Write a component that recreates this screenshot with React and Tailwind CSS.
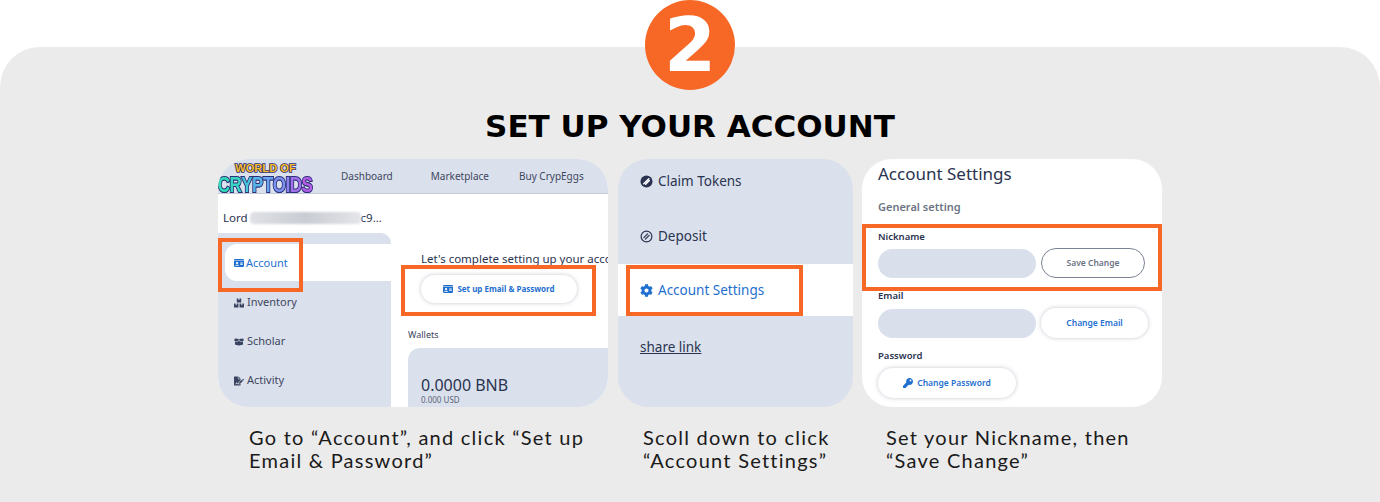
import { FaIdCard, FaBoxes, FaBoxOpen, FaKey, FaCog, FaFileSignature } from "react-icons/fa";

const ink = "text-[#2a3350]";
const blue = "text-[#1f6fd0]";

function Highlight({ className }) {
    return <div className={`absolute border-4 border-[#f76826] ${className}`}></div>;
}

function Logo() {
    return (
        <div className="flex flex-col items-center w-[94px] shrink-0 font-['Liberation_Sans',sans-serif] font-bold leading-none [paint-order:stroke_fill] [-webkit-text-stroke:1.6px_#2b2f78]">
            <div className="text-[11px] h-[10px] -mt-[3px] ml-[1px] tracking-[0.1px] text-[#fbbf24] [paint-order:stroke_fill]">WORLD OF</div>
            <div className="flex text-[17px] h-[14px] tracking-[-0.5px] scale-y-[1.35] origin-top [paint-order:stroke_fill] [text-shadow:0_1px_0_#2b2f78]">
                <span className="text-[#2fe0b8]">C</span>
                <span className="text-[#3ad6c4]">R</span>
                <span className="text-[#46c6d8]">Y</span>
                <span className="text-[#5ab4e8]">P</span>
                <span className="text-[#6aa4ee]">T</span>
                <span className="text-[#7c94f0]">O</span>
                <span className="text-[#8c84ee]">I</span>
                <span className="text-[#a070ea]">D</span>
                <span className="text-[#b45ee8]">S</span>
            </div>
        </div>
    );
}

function SideItem({ icon: Icon, label }) {
    return (
        <div className="h-[39px] flex items-center pl-4 gap-[3px] text-[11px] text-[#3d4660]">
            <Icon className="w-[10px] h-[10px] text-[#3a4360]" />
            <span>{label}</span>
        </div>
    );
}

function AccountCard() {
    return (
        <div className="relative w-[390px] h-[248px]">
            <div className="w-full h-full rounded-[30px] overflow-hidden bg-white flex flex-col">
                <div className="h-[35px] shrink-0 bg-[#dbe1ec] border-b border-[#c3cad8] flex items-center text-[10px] text-[#3d4660]">
                    <Logo />
                    <span className="ml-[29px]">Dashboard</span>
                    <span className="ml-[38px]">Marketplace</span>
                    <span className="ml-[30px]">Buy CrypEggs</span>
                </div>
                <div className="flex flex-1 min-h-0">
                    <div className="w-[173px] shrink-0">
                        <div className="h-[39px] pl-[5px] pt-[8px] flex items-center text-[11.5px] text-[#2a3350]">
                            <span>Lord</span>
                            <div className="w-[111px] h-[12px] ml-[2px] rounded-sm bg-gradient-to-r from-[#dfe1e6] via-[#c9ccd3] to-[#e4e5e9] blur-[1px]"></div>
                            <span>c9...</span>
                        </div>
                        <div className="h-[174px] bg-[#dbe1ec] rounded-tr-[10px] pt-[11px] pl-[7px]">
                            <div className={`h-[37px] bg-white rounded-l-[12px] flex items-center pl-[9px] pt-[1px] gap-[2px] text-[11px] ${blue}`}>
                                <FaIdCard className="w-[10px] h-[10px]" />
                                <span>Account</span>
                            </div>
                            <div className="-ml-[7px] pt-[2px]">
                                <SideItem icon={FaBoxes} label="Inventory" />
                                <SideItem icon={FaBoxOpen} label="Scholar" />
                                <SideItem icon={FaFileSignature} label="Activity" />
                            </div>
                        </div>
                    </div>
                    <div className="flex-1 min-w-0 pl-[17px] overflow-hidden">
                        <div className="pl-[13px] pt-[57px] text-[11.5px] leading-[16px] text-[#2a3350] whitespace-nowrap">Let's complete setting up your account</div>
                        <div className="ml-[13px] mt-[8px] w-[156px] h-[28px] rounded-full bg-white shadow-[0_0_4px_rgba(60,70,100,0.3)] flex items-center justify-center gap-[4px] text-[8px] font-bold text-[#1f6fd0]">
                            <FaIdCard className="w-[10px] h-[10px]" />
                            <span>Set up Email &amp; Password</span>
                        </div>
                        <div className="mt-[26px] text-[9px] leading-[12px] text-[#3d4660]">Wallets</div>
                        <div className="mt-[7px] h-[60px] bg-[#dbe1ec] rounded-tl-[12px] pl-[13px] pt-[27px]">
                            <div className="text-[16px] leading-[20px] text-[#2a3350] whitespace-nowrap">0.0000 BNB</div>
                            <div className="text-[8px] leading-[10px] text-[#5a6378]">0.000 USD</div>
                        </div>
                    </div>
                </div>
            </div>
            <Highlight className="left-0 top-[79px] w-[85px] h-[54px]" />
            <Highlight className="left-[183px] top-[106px] w-[195px] h-[51px]" />
        </div>
    );
}

function ClaimIcon() {
    return (
        <svg viewBox="0 0 14 14" className="w-[13px] h-[13px] shrink-0">
            <circle cx="7" cy="7" r="6.5" fill="#2a3350" />
            <path d="M4 9.5 9.5 4M6 10 10 6" stroke="#fff" strokeWidth="1.6" strokeLinecap="round" />
        </svg>
    );
}

function DepositIcon() {
    return (
        <svg viewBox="0 0 14 14" className="w-[13px] h-[13px] shrink-0" fill="none" stroke="#2a3350">
            <circle cx="7" cy="7" r="5.8" strokeWidth="1.3" />
            <path d="M4.2 8.2 8.2 4.2M5.8 9.8 9.8 5.8" strokeWidth="1.3" strokeLinecap="round" />
        </svg>
    );
}

function MenuCard() {
    return (
        <div className="relative w-[235px] h-[248px] ml-[10px]">
            <div className="w-full h-full rounded-[30px] overflow-hidden bg-[#dbe1ec] flex flex-col text-[13.5px]">
                <div className={`mt-[12px] h-[20px] pl-[22px] flex items-center gap-[5px] ${ink}`}>
                    <ClaimIcon />
                    <span>Claim Tokens</span>
                </div>
                <div className={`mt-[35px] h-[20px] pl-[22px] flex items-center gap-[5px] ${ink}`}>
                    <DepositIcon />
                    <span>Deposit</span>
                </div>
                <div className={`mt-[18px] h-[52px] bg-white pl-[22px] flex items-center gap-[5px] ${blue}`}>
                    <FaCog className="w-[13px] h-[13px]" />
                    <span>Account Settings</span>
                </div>
                <div className={`mt-[21px] pl-[22px] underline ${ink}`}>share link</div>
            </div>
            <Highlight className="left-[8px] top-[106px] w-[177px] h-[51px]" />
        </div>
    );
}

function FieldRow({ className, children }) {
    return (
        <div className={`flex items-center pl-[16px] ${className}`}>
            <div className="w-[158px] h-[29px] rounded-full bg-[#d9e0ec]"></div>
            {children}
        </div>
    );
}

function SettingsCard() {
    const label = `pl-[16px] text-[9.5px] leading-[12px] font-semibold ${ink}`;
    const whiteBtn = "h-[30px] rounded-full bg-white shadow-[0_0_4px_rgba(60,70,100,0.3)] flex items-center justify-center text-[8.5px] font-semibold text-[#1f6fd0]";
    return (
        <div className="relative w-[300px] h-[248px] ml-[9px]">
            <div className="w-full h-full rounded-[30px] overflow-hidden bg-white flex flex-col">
                <div className={`pl-[16px] pt-[4px] text-[17px] leading-[22px] ${ink}`}>Account Settings</div>
                <div className="pl-[16px] mt-[15px] text-[11px] leading-[14px] font-semibold text-[#6c7484]">General setting</div>
                <div className={`mt-[17px] ${label}`}>Nickname</div>
                <FieldRow className="mt-[5px]">
                    <div className="ml-[5px] w-[104px] h-[30px] rounded-full border-[1.5px] border-[#7a8294] flex items-center justify-center text-[8.5px] font-semibold text-[#6c7484]">Save Change</div>
                </FieldRow>
                <div className={`mt-[12px] ${label}`}>Email</div>
                <FieldRow className="mt-[6px]">
                    <div className={`ml-[5px] w-[107px] ${whiteBtn}`}>Change Email</div>
                </FieldRow>
                <div className={`mt-[12px] ${label}`}>Password</div>
                <div className={`ml-[16px] mt-[6px] w-[138px] gap-[4px] ${whiteBtn}`}>
                    <FaKey className="w-[10px] h-[10px]" />
                    <span>Change Password</span>
                </div>
            </div>
            <Highlight className="left-0 top-[65px] w-[300px] h-[67px]" />
        </div>
    );
}

function Caption({ className, children }) {
    return (
        <p className={`text-[20px] leading-[23px] tracking-[1.25px] text-[#1a1a1a] font-['Lato',sans-serif] ${className}`}>
            {children}
        </p>
    );
}

export default function App() {
    return (
        <div className="bg-white w-[1380px] h-[502px] overflow-hidden font-['Noto_Sans',sans-serif]">
            <div className="mt-[47px] h-[455px] bg-[#ebebeb] rounded-t-[40px] flex flex-col items-center">
                <div className="-mt-[47px] w-[90px] h-[90px] shrink-0 rounded-full bg-[#f76826] flex items-center justify-center text-[75px] leading-none font-bold text-white font-['DejaVu_Sans',sans-serif]">2</div>
                <h1 className="mt-[16px] h-[40px] leading-[40px] text-[31px] font-bold text-black font-['DejaVu_Sans',sans-serif]">SET UP YOUR ACCOUNT</h1>
                <div className="mt-[13px] w-full pl-[218px] flex">
                    <AccountCard />
                    <MenuCard />
                    <SettingsCard />
                </div>
                <div className="w-full flex mt-[19px]">
                    <Caption className="ml-[249px] w-[394px]">Go to “Account”, and click “Set up<br />Email &amp; Password”</Caption>
                    <Caption className="w-[243px]">Scoll down to click<br />“Account Settings”</Caption>
                    <Caption>Set your Nickname, then<br />“Save Change”</Caption>
                </div>
            </div>
        </div>
    );
}
